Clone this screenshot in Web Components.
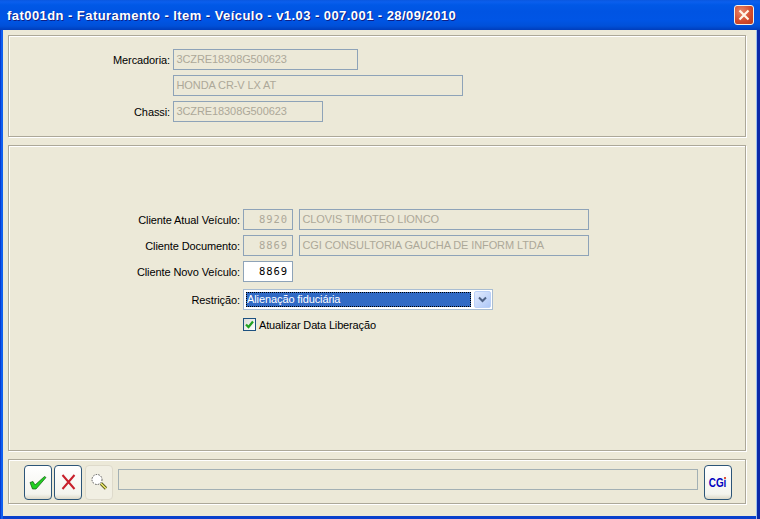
<!DOCTYPE html>
<html>
<head>
<meta charset="utf-8">
<title>fat001dn</title>
<style>
html,body{ margin:0; padding:0; background:#0a3cc4; }
</style>
</head>
<body>
<xp-window caption="fat001dn - Faturamento - Item - Veículo - v1.03 - 007.001 - 28/09/2010">
  <xp-group style="height:102px;padding-top:13px;--lw:161px">
    <xp-row label="Mercadoria:"><xp-field value="3CZRE18308G500623" w="185"></xp-field></xp-row>
    <xp-row><xp-field value="HONDA CR-V LX AT" w="290"></xp-field></xp-row>
    <xp-row label="Chassi:"><xp-field value="3CZRE18308G500623" w="150"></xp-field></xp-row>
  </xp-group>
  <xp-group style="height:306px;padding-top:63px;--lw:231px">
    <xp-row label="Cliente Atual Veículo:"><xp-field value="8920" w="50" num></xp-field><xp-field value="CLOVIS TIMOTEO LIONCO" w="290"></xp-field></xp-row>
    <xp-row label="Cliente Documento:"><xp-field value="8869" w="50" num></xp-field><xp-field value="CGI CONSULTORIA GAUCHA DE INFORM LTDA" w="290"></xp-field></xp-row>
    <xp-row label="Cliente Novo Veículo:"><xp-field value="8869" w="50" num active></xp-field></xp-row>
    <xp-row label="Restrição:" style="margin-top:2px"><xp-select value="Alienação fiduciária"></xp-select></xp-row>
    <xp-row style="margin-top:-1px"><xp-check label="Atualizar Data Liberação"></xp-check></xp-row>
  </xp-group>
  <xp-toolbar></xp-toolbar>
</xp-window>

<script>
customElements.define('xp-window', class extends HTMLElement {
  constructor(){ super(); this.attachShadow({mode:'open'}); }
  connectedCallback(){
    this.shadowRoot.innerHTML = `
    <style>
:host{
  display:flex;
  flex-direction:column;
  width:760px;
  height:519px;
  box-sizing:border-box;
  font-family:"Liberation Sans",Arial,sans-serif;
  background:linear-gradient(90deg,#0a3cd0 0,#0a3cd0 1px,#0f5ff0 1px,#0f5ff0 3px,#0a40cc 3px,#0a40cc 756px,#9cc0ee 756px,#9cc0ee 757px,#0a28a8 757px);
  overflow:hidden;
}
.bar{
  height:30px;
  flex:none;
  display:flex;
  align-items:center;
  justify-content:space-between;
  padding:0 6px 0 7px;
  box-sizing:border-box;
  background:linear-gradient(#0a58e0 0,#0a5fee 2px,#0058e6 5px,#0054e3 12px,#0055e5 20px,#0050d8 26px,#003dbb 30px);
  color:#fff;
  font:bold 13px "Liberation Sans",Arial,sans-serif;
  letter-spacing:.44px;
  text-shadow:1px 1px 0 #0f1f85;
}
.close{
  width:20px;
  height:20px;
  box-sizing:border-box;
  border:1px solid #f4f0e8;
  border-radius:3px;
  background:radial-gradient(circle at 35% 30%,#e8876a,#d2492b 60%,#b83a1e);
  display:grid;
  place-items:center;
}
.client{
  flex:1;
  margin:0 4px 3px 3px;
  padding:5px 0 0 5px;
  background:#ece9d8;
  display:flex;
  flex-direction:column;
  gap:8px;
}
    </style>
    <div class="bar"><span>${this.getAttribute('caption')}</span>
      <div class="close"><svg width="12" height="12" viewBox="0 0 12 12"><path d="M1.5 1.5l9 9M10.5 1.5l-9 9" stroke="#fff6e8" stroke-width="2.2"/></svg></div>
    </div>
    <div class="client"><slot></slot></div>`;
  }
});

// caixa com borda em baixo relevo
customElements.define('xp-group', class extends HTMLElement {
  constructor(){ super(); this.attachShadow({mode:'open'}); }
  connectedCallback(){
    this.shadowRoot.innerHTML = `
    <style>
:host{
  display:flex;
  flex-direction:column;
  gap:5px;
  box-sizing:border-box;
  width:738px;
  flex:none;
  border:1px solid #aca899;
  box-shadow:inset 1px 1px 0 #fff, 1px 1px 0 #fff;
}
    </style>
    <slot></slot>`;
  }
});

customElements.define('xp-row', class extends HTMLElement {
  constructor(){ super(); this.attachShadow({mode:'open'}); }
  connectedCallback(){
    this.shadowRoot.innerHTML = `
    <style>
:host{
  display:flex;
  align-items:center;
  gap:3px;
  height:21px;
}
.lb{
  width:var(--lw,160px);
  flex:none;
  text-align:right;
  font:11px "Liberation Sans",Arial,sans-serif;
  letter-spacing:-.1px;
  color:#000;
}
.fields{ display:flex; gap:6px; align-items:center; }
    </style>
    <span class="lb">${this.getAttribute('label')||''}</span>
    <div class="fields"><slot></slot></div>`;
  }
});

customElements.define('xp-field', class extends HTMLElement {
  constructor(){ super(); this.attachShadow({mode:'open'}); }
  connectedCallback(){
    let num = this.hasAttribute('num'), on = this.hasAttribute('active');
    this.shadowRoot.innerHTML = `
    <style>
:host{
  display:block;
  box-sizing:border-box;
  width:${this.getAttribute('w')}px;
  height:21px;
  border:1px solid #8ea3b8;
  padding:0 ${num?'4px':'2.5px'};
  background:${on?'#fff':'#ece9d8'};
  color:${on?'#000':'#aca899'};
  font:${num?'10.5px/18px "DejaVu Sans Mono"':'11px/18px "Liberation Sans"'},sans-serif;
  text-align:${num?'right':'left'};
  letter-spacing:${num?'.9px':'-.1px'};
  white-space:nowrap;
  overflow:hidden;
}
    </style>${this.getAttribute('value')}`;
  }
});

customElements.define('xp-select', class extends HTMLElement {
  constructor(){ super(); this.attachShadow({mode:'open'}); }
  connectedCallback(){
    this.shadowRoot.innerHTML = `
    <style>
:host{
  display:flex;
  box-sizing:border-box;
  width:250px;
  height:21px;
  border:1px solid #a9bdd2;
  background:#fff;
  padding:2px;
  gap:2px;
}
.val{
  flex:1;
  background:#316ac5;
  color:#fff;
  font:11px/15px "Liberation Sans",Arial,sans-serif;
  letter-spacing:-.1px;
  padding-left:1px;
  outline:1px dotted #000;
  outline-offset:-1px;
}
.btn{
  width:15px;
  margin:-1px -1px -1px 1px;
  border:1px solid #bad0f7;
  border-radius:2px;
  background:linear-gradient(135deg,#e1eafe,#aec8f7);
  display:grid;
  place-items:center;
}
    </style>
    <div class="val">${this.getAttribute('value')}</div>
    <div class="btn"><svg width="9" height="7" viewBox="0 0 9 7"><path d="M1 1.5l3.5 3.5L8 1.5" fill="none" stroke="#4d6185" stroke-width="2"/></svg></div>`;
  }
});

customElements.define('xp-check', class extends HTMLElement {
  constructor(){ super(); this.attachShadow({mode:'open'}); }
  connectedCallback(){
    this.shadowRoot.innerHTML = `
    <style>
:host{
  display:flex;
  align-items:center;
  gap:3px;
  font:11px "Liberation Sans",Arial,sans-serif;
  letter-spacing:-.15px;
  color:#000;
}
.box{
  width:13px;
  height:13px;
  box-sizing:border-box;
  border:1px solid #1c5180;
  background:linear-gradient(135deg,#dcdcd7,#fff);
  display:grid;
  place-items:center;
}
    </style>
    <div class="box"><svg width="9" height="9" viewBox="0 0 9 9"><path d="M1 4.5l2.5 2.5L8 1.5" fill="none" stroke="#21a121" stroke-width="2.2"/></svg></div>
    <span>${this.getAttribute('label')}</span>`;
  }
});

customElements.define('xp-toolbar', class extends HTMLElement {
  constructor(){ super(); this.attachShadow({mode:'open'}); }
  connectedCallback(){
    this.shadowRoot.innerHTML = `
    <style>
:host{
  display:flex;
  align-items:center;
  box-sizing:border-box;
  width:738px;
  height:45px;
  flex:none;
  padding:1px 13px 0 15px;
  gap:2px;
  border:1px solid #aca899;
  box-shadow:inset 1px 1px 0 #fff, 1px 1px 0 #fff;
}
.b{
  position:relative;
  width:28px;
  height:35px;
  box-sizing:border-box;
  border:1px solid #2c5578;
  border-radius:4px;
  background:linear-gradient(#fff,#f4f4ee 85%,#dcd8c8);
  display:grid;
  place-items:center;
  flex:none;
}
.b.off{ border-color:#dedacb; background:#f1efe3; margin-left:1px; }
.status{
  flex:1;
  height:21px;
  margin:0 4px 5px 3px;
  border:1px solid #a3b0b4;
  background:#ece9d8;
  box-sizing:border-box;
}
.cgi{ display:block; font:bold 13px "Liberation Sans",sans-serif; color:#0000c0; transform:scaleX(.76); }
.dot{ position:absolute; left:19px; top:11px; width:2px; height:2px; background:#e0503c; }
    </style>
    <div class="b"><svg width="18" height="16" viewBox="0 0 18 16"><path d="M1 8.5l3-1 2 3.5L15.5 2.5l1.5 1L7 15H3.5z" fill="#22d022" stroke="#0e5a0e" stroke-width=".7"/></svg></div>
    <div class="b"><svg width="15" height="16" viewBox="0 0 15 16"><path d="M1.5 1l12 14M13.5 1L1.5 15" stroke="#c8202c" stroke-width="2"/></svg></div>
    <div class="b off"><svg width="18" height="18" viewBox="0 0 18 18"><circle cx="7" cy="6.5" r="5" fill="#fff" stroke="#555" stroke-dasharray="1.5 1.2"/><path d="M11 10.5l5 5" stroke="#55551a" stroke-width="3.2"/><path d="M11 10.5l5 5" stroke="#f2f070" stroke-width="1.5"/></svg></div>
    <div class="status"></div>
    <div class="b"><span class="cgi">CGi</span><i class="dot"></i></div>`;
  }
});
</script>
</body>
</html>
